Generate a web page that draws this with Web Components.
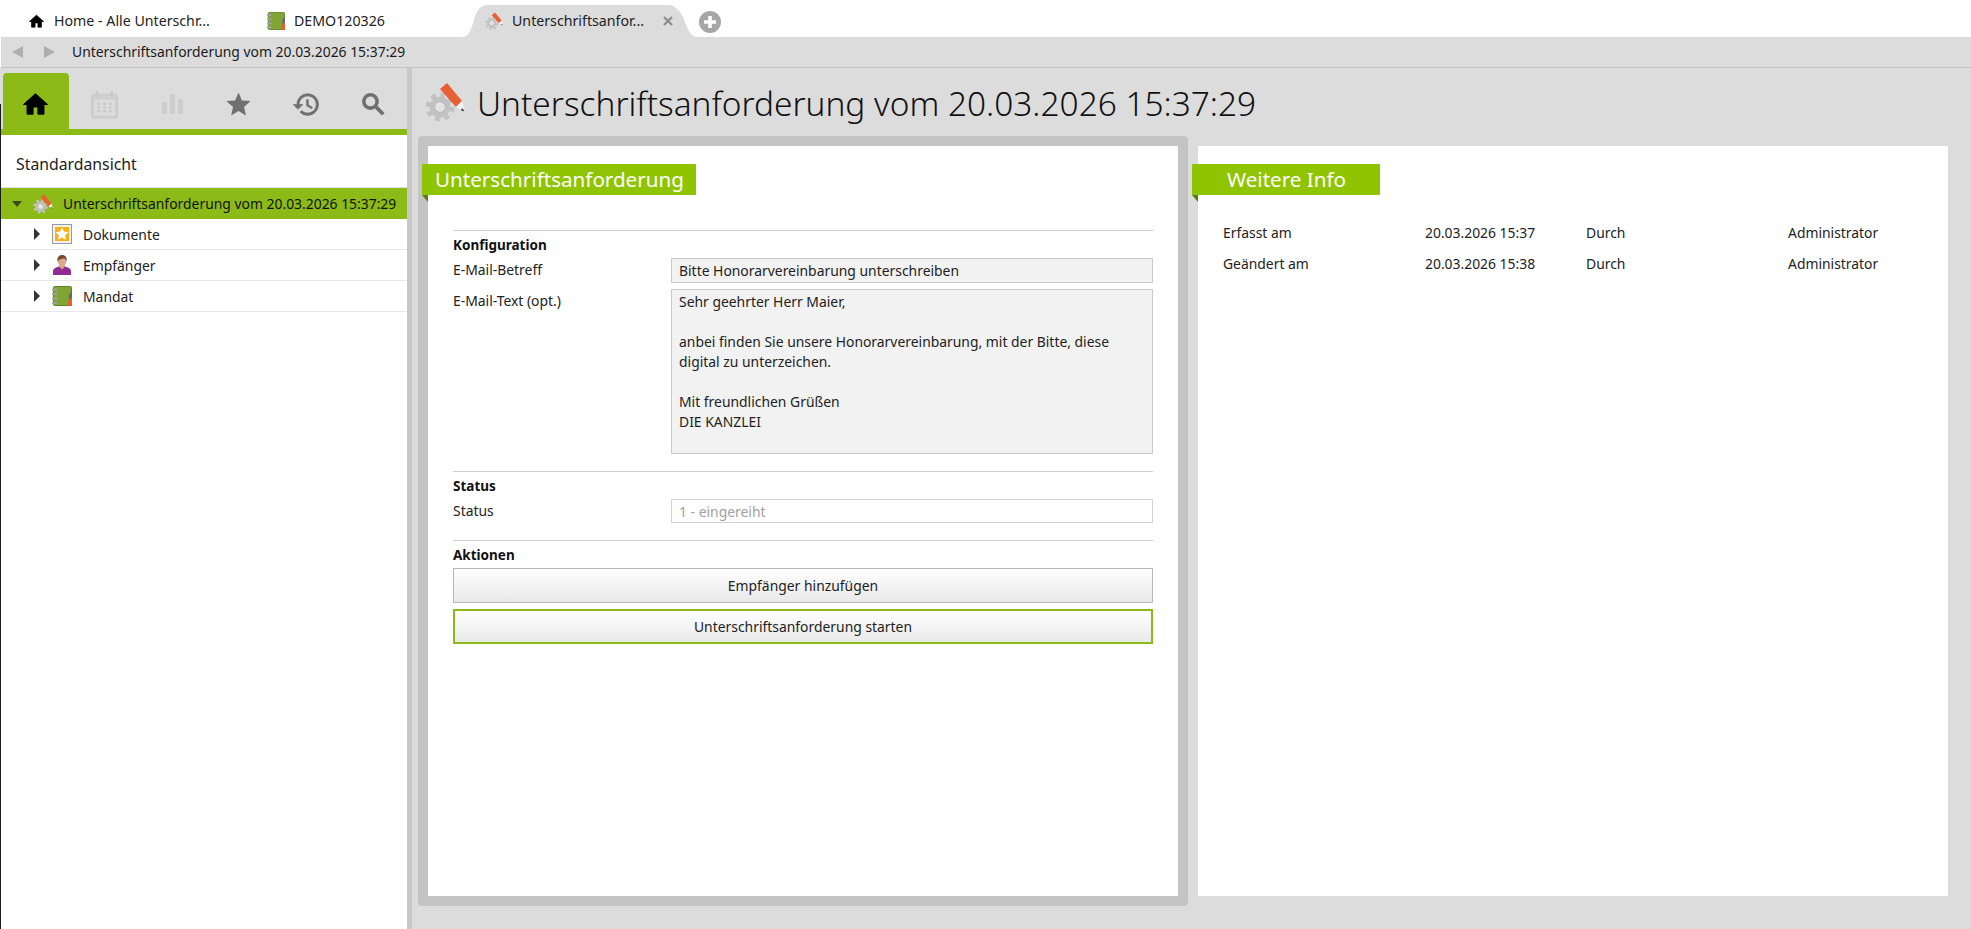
<!doctype html>
<html lang="de">
<head>
<meta charset="utf-8">
<title>Unterschriftsanforderung</title>
<style>
  html, body { margin: 0; height: 100%; overflow: hidden; }
  body { font: 13.9px/20px "Noto Sans", "Open Sans", sans-serif; color: #1a1a1a; background: #dcdcdc; }
</style>
</head>
<body>
<app-window>
  <tab-strip slot="tabs">
    <strip-tab icon="home-small">Home - Alle Unterschr...</strip-tab>
    <strip-tab icon="notebook" style="--tab-width:195px">DEMO120326</strip-tab>
    <strip-tab icon="signature" active>Unterschriftsanfor...</strip-tab>
  </tab-strip>
  <address-bar slot="address">Unterschriftsanforderung vom 20.03.2026 15:37:29</address-bar>
  <side-panel slot="side">
    <tree-row icon="signature" selected>Unterschriftsanforderung vom 20.03.2026 15:37:29</tree-row>
    <tree-row icon="docstar">Dokumente</tree-row>
    <tree-row icon="person">Empfänger</tree-row>
    <tree-row icon="notebook">Mandat</tree-row>
  </side-panel>
  <detail-page slot="main" heading="Unterschriftsanforderung vom 20.03.2026 15:37:29">
    <detail-card slot="left" focused>
      <card-banner>Unterschriftsanforderung</card-banner>
      <form-section heading="Konfiguration">
        <form-row label="E-Mail-Betreff"><field-box>Bitte Honorarvereinbarung unterschreiben</field-box></form-row>
        <form-row label="E-Mail-Text (opt.)">
          <field-box multiline>Sehr geehrter Herr Maier,

anbei finden Sie unsere Honorarvereinbarung, mit der Bitte, diese
digital zu unterzeichen.

Mit freundlichen Grüßen
DIE KANZLEI</field-box>
        </form-row>
      </form-section>
      <form-section heading="Status">
        <form-row label="Status"><field-box disabled>1 - eingereiht</field-box></form-row>
      </form-section>
      <form-section heading="Aktionen">
        <action-button>Empfänger hinzufügen</action-button>
        <action-button primary>Unterschriftsanforderung starten</action-button>
      </form-section>
    </detail-card>
    <detail-card slot="right">
      <card-banner wide>Weitere Info</card-banner>
      <info-grid>
        <span>Erfasst am</span><span>20.03.2026 15:37</span><span>Durch</span><span>Administrator</span>
        <span>Geändert am</span><span>20.03.2026 15:38</span><span>Durch</span><span>Administrator</span>
      </info-grid>
    </detail-card>
  </detail-page>
</app-window>

<script>
const MATERIAL = {
  home: 'M10 20v-6h4v6h5v-8h3L12 3 2 12h3v8z',
  star: 'M12 17.3l6.2 3.7-1.6-7L22 9.2l-7.2-.6L12 2 9.2 8.6 2 9.2 7.5 14l-1.6 7z',
  history: 'M13 3a9 9 0 0 0-9 9H1l3.89 3.89.07.14L9 12H6c0-3.87 3.13-7 7-7s7 3.13 7 7-3.13 7-7 7c-1.93 0-3.68-.79-4.94-2.06l-1.42 1.42A8.954 8.954 0 0 0 13 21a9 9 0 0 0 0-18zm-1 5v5l4.28 2.54.72-1.21-3.5-2.08V8H12z',
  search: 'M15.5 14h-.79l-.28-.27A6.471 6.471 0 0 0 16 9.5 6.5 6.5 0 1 0 9.5 16c1.61 0 3.09-.59 4.23-1.57l.27.28v.79l5 4.99L20.49 19l-4.99-5zm-6 0C7.01 14 5 11.99 5 9.5S7.01 5 9.5 5 14 7.01 14 9.5 11.99 14 9.5 14z'
};

const ICONS = {
  'home-small': `<svg viewBox="0 0 24 24" width="100%" height="100%"><path d="${MATERIAL.home}" fill="#000" stroke="#000"/></svg>`,
  home: `<svg viewBox="0 0 24 24" width="100%" height="100%"><path d="${MATERIAL.home}" fill="#000" stroke="#000" stroke-width=".8"/></svg>`,
  star: `<svg viewBox="0 0 24 24" width="100%" height="100%"><path d="${MATERIAL.star}" fill="#6f6f6f"/></svg>`,
  history: `<svg viewBox="0 0 24 24" width="100%" height="100%"><path d="${MATERIAL.history}" fill="#6f6f6f" stroke="#6f6f6f" stroke-width=".5"/></svg>`,
  search: `<svg viewBox="0 0 24 24" width="100%" height="100%"><path d="${MATERIAL.search}" fill="#6f6f6f" stroke="#6f6f6f" stroke-width=".9"/></svg>`,
  calendar: `<svg viewBox="0 0 24 24" width="100%" height="100%"><rect x="1.5" y="3.5" width="21" height="19.5" rx="2.5" fill="#d0d0d0" stroke="#c8c8c8"/><path d="M6 1v4M18 1v4" stroke="#c8c8c8" stroke-width="2"/><rect x="3.5" y="8" width="17" height="13" fill="#dcdcdc"/><path d="M6 11.5h2.4M10.8 11.5h2.4M15.6 11.5h2.4M6 14.5h2.4M10.8 14.5h2.4M15.6 14.5h2.4M6 17.5h2.4M10.8 17.5h2.4M15.6 17.5h2.4" stroke="#c8c8c8" stroke-width="1.7"/></svg>`,
  chart: `<svg viewBox="0 0 24 24" width="100%" height="100%"><path d="M2 10h5v12H2zM10 2h5v20h-5zM18 7h5v15h-5z" fill="#cdcdcd"/></svg>`,
  signature: `<svg viewBox="0 0 40 40" width="100%" height="100%"><circle cx="15" cy="25" r="8" fill="none" stroke="#c2c2c2" stroke-width="5"/><circle cx="15" cy="25" r="12.2" fill="none" stroke="#c2c2c2" stroke-width="4.5" stroke-dasharray="4.8 4.78"/><circle cx="15" cy="25" r="5.400" fill="#e4e4e4" stroke="#aaa" stroke-width=".8"/><path d="M15 7l7-6 15 18-6 6z" fill="#e95f34"/><path d="M31 25l6-6 2.5 10z" fill="#f4f4f4"/><path d="M37.5 26l2 3.6-3.8-1.4z" fill="#444"/></svg>`,
  notebook: `<svg viewBox="0 0 20 20" width="100%" height="100%"><rect x="1.5" y=".5" width="18" height="19" rx="1" fill="#7fa635" stroke="#5f8226"/><path d="M.8 3.5h3.400M.8 8h3.400M.8 12.500h3.400M.8 17h3.400" stroke="#a2a2a2" stroke-width="2.200" stroke-linecap="round"/><path d="M20 5.500c-3 1-4 5-3 8l3 .5z" fill="#6a6a6a"/><path d="M20 12c-3 0-4.500 3-3.800 8H20z" fill="#e5602f"/></svg>`,
  person: `<svg viewBox="0 0 20 20" width="100%" height="100%"><path d="M1 20v-4c0-2.500 3.500-3.800 6-4.500h6c2.500.7 6 2 6 4.500v4z" fill="#8e2d92"/><path d="M7 11.500l3 3 3-3v-2H7z" fill="#d9a586"/><ellipse cx="10" cy="6" rx="4.300" ry="5" fill="#dba98b"/><path d="M5.500 6.500C4.500 1.500 8 0 10 0c3 0 5.500 2 4.500 6.500-.7-2-1.700-3-2.500-3.300-2 .8-5 .8-6.500 3.300z" fill="#7a4a2c"/></svg>`,
  docstar: `<svg viewBox="0 0 20 20" width="100%" height="100%"><rect x=".5" y=".5" width="19" height="19" fill="#f3f3f3" stroke="#9a9a9a"/><rect x="3" y="3" width="14" height="14" fill="#fbb016"/><path d="M10 3.500l2 4.100 4.500.6-3.300 3.100.8 4.500-4-2.200-4 2.200.8-4.500-3.300-3.100 4.500-.6z" fill="#fff"/></svg>`
};

// small helper, every element below has the same shadow setup
class ShadowElement extends HTMLElement {
  connectedCallback() {
    if (this.shadowRoot) return;
    this.attachShadow({mode: 'open'}).innerHTML = this.render();
  }
}

class AppIcon extends ShadowElement {
  render() {
    return `<style>:host{display:block;width:var(--size,20px);height:var(--size,20px);flex:none}svg{display:block}</style>${ICONS[this.getAttribute('name')]}`;
  }
}

class AppWindow extends ShadowElement {
  render() {
    return `<style>
      :host { display: grid; grid-template: 37px 31px 1fr / 407px 5px 1fr; height: 929px; position: relative; }
      .tabs { grid-column: 1 / -1; }
      .address { grid-column: 1 / -1; }
      .split { background: #c8c8c8; }
      .edge { position: absolute; left: 0; top: 104px; bottom: 0; width: 1px; background: #1a1a1a; }
    </style>
    <div class="tabs"><slot name="tabs"></slot></div>
    <div class="address"><slot name="address"></slot></div>
    <slot name="side"></slot>
    <div class="split"></div>
    <slot name="main"></slot>
    <div class="edge"></div>`;
  }
}

class TabStrip extends ShadowElement {
  render() {
    return `<style>
      :host { display: flex; align-items: flex-end; height: 37px; background: #fff; padding-left: 28px; box-sizing: border-box; font-size: 14.2px; }
      .add { width: 22px; height: 22px; margin: 0 0 4px 2px; }
    </style>
    <slot></slot>
    <svg class="add" viewBox="0 0 22 22"><circle cx="11" cy="11" r="11" fill="#a6a6a6"/><path d="M11 5v12M5 11h12" stroke="#fff" stroke-width="3.600"/></svg>`;
  }
}

class StripTab extends ShadowElement {
  render() {
    const active = this.hasAttribute('active');
    return `<style>
      :host { display: flex; align-items: center; height: 32px; box-sizing: border-box; width: var(--tab-width, 239px); white-space: nowrap; color: #222; }
      :host([active]) {
        width: 235px; padding: 0 24px 0 23px; background: #dcdcdc;
        clip-path: path("M0 32C7 32 9 25 12 15C14 7 17 0 26 0H206C213 0 218 6 221 12C226 24 228 32 235 32Z");
      }
      app-icon { margin-right: 9px; }
      .text { flex: none; }
      .close { margin-left: auto; color: #8a8a8a; width: 10px; height: 10px; flex: none; }
    </style>
    <app-icon name="${this.getAttribute('icon')}" style="--size:${this.getAttribute('icon') === 'home-small' ? '17px' : '18px'}"></app-icon>
    <span class="text"><slot></slot></span>
    ${active ? '<svg class="close" viewBox="0 0 10 10"><path d="M1 1l8 8M9 1l-8 8" stroke="currentColor" stroke-width="2.200"/></svg>' : ''}`;
  }
}

class AddressBar extends ShadowElement {
  render() {
    return `<style>
      :host { display: flex; align-items: center; height: 31px; box-sizing: border-box; background: #dcdcdc; border-bottom: 1px solid #c2c2c2; border-left: 1px solid #fff; padding-left: 11px; }
      svg { width: 11px; height: 12px; }
      .fwd { margin-left: 21px; margin-right: 17px; }
    </style>
    <svg viewBox="0 0 11 12"><path d="M11 0v12L0 6z" fill="#aeaeae"/></svg>
    <svg class="fwd" viewBox="0 0 11 12"><path d="M0 0v12l11-6z" fill="#aeaeae"/></svg>
    <span><slot></slot></span>`;
  }
}

class SidePanel extends ShadowElement {
  render() {
    const tabs = [['home', 1], ['calendar', 0], ['chart', 0], ['star', 0], ['history', 0], ['search', 0]];
    return `<style>
      :host { display: flex; flex-direction: column; background: #fff; min-height: 0; }
      nav { display: flex; height: 67px; box-sizing: border-box; padding: 5px 0 0 3px; background: #dcdcdc; border-bottom: 6px solid #8cbb18; }
      nav div { width: 67.500px; display: flex; align-items: center; justify-content: center; padding-top: 6px; box-sizing: border-box; }
      nav div.on { width: 66px; margin-right: 2px; background: #8cbb18; border-radius: 4px 4px 0 0; }
      h2 { margin: 0; height: 52px; box-sizing: border-box; padding: 18px 0 0 16px; font: 400 15.800px/22px "Noto Sans", sans-serif; color: #222; }
    </style>
    <nav>${tabs.map(([n, on]) => `<div class="${on ? 'on' : ''}"><app-icon name="${n}" style="--size:${n === 'chart' ? '24px' : '29px'}"></app-icon></div>`).join('')}</nav>
    <h2>Standardansicht</h2>
    <slot></slot>`;
  }
}

class TreeRow extends ShadowElement {
  render() {
    const selected = this.hasAttribute('selected');
    return `<style>
      :host { display: flex; align-items: center; height: 31px; box-sizing: border-box; padding-left: 34px; border-bottom: 1px solid #e8e8e8; white-space: nowrap; color: #222; }
      :host([selected]) { padding-left: 12px; background: #8cbb18; border-bottom: 0; border-top: 1px solid #e2e2e2; height: 32px; color: #111; }
      .arrow { width: 6px; height: 12px; margin-right: 12px; }
      :host([selected]) .arrow { width: 10px; height: 6px; margin-right: 11px; }
      app-icon { margin-right: 11px; }
      :host([selected]) app-icon { margin-right: 10px; }
      span { padding-top: 1px; }
      :host([selected]) span { padding-top: 0; }
    </style>
    ${selected
      ? '<svg class="arrow" viewBox="0 0 10 6"><path d="M0 0h10L5 6z" fill="#3a4a18"/></svg>'
      : '<svg class="arrow" viewBox="0 0 6 12"><path d="M0 0v12l6-6z" fill="#333"/></svg>'}
    <app-icon name="${this.getAttribute('icon')}"></app-icon>
    <span><slot></slot></span>`;
  }
}

class DetailPage extends ShadowElement {
  render() {
    return `<style>
      :host { display: block; background: #dcdcdc; padding: 0 13px 0 6px; min-width: 0; }
      header { display: flex; align-items: center; height: 68px; padding: 0 0 0 7px; }
      h1 { margin: 2px 0 0 12px; font: 300 33.400px/40px "Noto Sans", sans-serif; color: #111; white-space: nowrap; }
      .cards { display: grid; grid-template-columns: 770px 770px; height: 770px; }
    </style>
    <header><app-icon name="signature" style="--size:40px"></app-icon><h1>${this.getAttribute('heading')}</h1></header>
    <div class="cards"><slot name="left"></slot><slot name="right"></slot></div>`;
  }
}

class DetailCard extends ShadowElement {
  render() {
    return `<style>
      :host { display: block; box-sizing: border-box; background: #fff; background-clip: padding-box; border: 10px solid transparent; border-radius: 4px; padding-top: 18px; }
      :host([focused]) { border-color: #c4c4c4; }
    </style>
    <slot></slot>`;
  }
}

class CardBanner extends ShadowElement {
  render() {
    return `<style>
      :host { display: block; position: relative; width: 274px; height: 31px; margin-left: -6px; box-sizing: border-box; padding-left: 13px; background: #8fc400; color: #fff; font: 400 20.600px/31px "Noto Sans", sans-serif; white-space: nowrap; }
      :host([wide]) { width: 188px; padding-left: 35px; }
      :host::after { content: ""; position: absolute; left: 0; top: 31px; border-style: solid; border-width: 0 6px 7px 0; border-color: transparent #5c7d08 transparent transparent; }
    </style>
    <slot></slot>`;
  }
}

class FormSection extends ShadowElement {
  render() {
    return `<style>
      :host { display: block; margin: 0 25px 17px; border-top: 1px solid #cfcfcf; padding-top: 4px; }
      :host(:first-of-type) { margin-top: 35px; }
      h3 { margin: 0 0 3px; font: 700 13.500px/20px "Noto Sans", sans-serif; color: #111; }
      .body { display: flex; flex-direction: column; gap: 6px; }
    </style>
    <h3>${this.getAttribute('heading')}</h3>
    <div class="body"><slot></slot></div>`;
  }
}

class FormRow extends ShadowElement {
  render() {
    return `<style>
      :host { display: grid; grid-template-columns: 218px 482px; }
      .label { color: #222; padding-top: 2px; }
    </style>
    <div class="label">${this.getAttribute('label')}</div>
    <slot></slot>`;
  }
}

class FieldBox extends ShadowElement {
  render() {
    return `<style>
      :host { display: block; box-sizing: border-box; height: 25px; padding: 2px 7px; background: #f2f2f2; border: 1px solid #c8c8c8; color: #222; }
      :host([multiline]) { height: 165px; }
      :host([disabled]) { height: 24px; padding-top: 2px; background: #fff; border-color: #d2d2d2; color: #a0a0a0; }
      .value { white-space: pre-wrap; }
    </style>
    <div class="value"><slot></slot></div>`;
  }
}

class ActionButton extends ShadowElement {
  render() {
    return `<style>
      :host { display: flex; align-items: center; justify-content: center; height: 35px; box-sizing: border-box; padding-top: 1px; border: 1px solid #b8b8b8; background: linear-gradient(#fff, #e9e9e9); color: #222; }
      :host([primary]) { border: 2px solid #8cbb18; }
    </style>
    <slot></slot>`;
  }
}

class InfoGrid extends ShadowElement {
  render() {
    return `<style>
      :host { display: grid; grid-template-columns: 202px 161px 202px auto; grid-auto-rows: 31px; align-items: center; padding: 22px 0 0 25px; color: #222; }
    </style>
    <slot></slot>`;
  }
}

customElements.define('app-icon', AppIcon);
customElements.define('app-window', AppWindow);
customElements.define('tab-strip', TabStrip);
customElements.define('strip-tab', StripTab);
customElements.define('address-bar', AddressBar);
customElements.define('side-panel', SidePanel);
customElements.define('tree-row', TreeRow);
customElements.define('detail-page', DetailPage);
customElements.define('detail-card', DetailCard);
customElements.define('card-banner', CardBanner);
customElements.define('form-section', FormSection);
customElements.define('form-row', FormRow);
customElements.define('field-box', FieldBox);
customElements.define('action-button', ActionButton);
customElements.define('info-grid', InfoGrid);
</script>
</body>
</html>
